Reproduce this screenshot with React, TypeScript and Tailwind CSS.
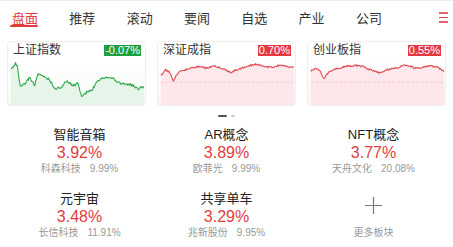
import React from 'react';

const FONT = { fontFamily: '"Liberation Sans", "Noto Sans CJK SC", sans-serif' };

const TABS = ['盘面', '推荐', '滚动', '要闻', '自选', '产业', '公司'];

type Pt = [number, number];

const GREEN_PTS: Pt[] = [
    [0, 28], [4.7, 21.3], [7, 26], [9.7, 46.3], [14.7, 43], [19.7, 36], [24.7, 44.7], [28, 33],
    [33, 34.7], [39.7, 38], [46.3, 48], [53, 46.3], [58, 39.7], [64.7, 44.7], [69.7, 42.3],
    [74, 56.3], [79.7, 51.3], [84.7, 49.7], [89.7, 39.7], [96.3, 36.3], [104.7, 35.7],
    [111.3, 41.3], [118, 43], [124.7, 43.7], [133, 48], [139, 45.7],
];

const SZ_PTS: Pt[] = [
    [0, 34.7], [4.7, 28], [9.7, 31.3], [13, 39.7], [18, 31.3], [21.3, 29.7], [26.3, 28],
    [39.7, 24.7], [46.3, 26.3], [56.3, 24.7], [63, 26.3], [73, 31.3], [79.7, 28], [89.7, 24.7],
    [99.7, 22.3], [108, 24.7], [116.3, 25.7], [124.7, 23], [131.3, 25], [139, 25.7],
];

const CY_PTS: Pt[] = [
    [0, 29.7], [4.7, 26.3], [9.7, 29], [13.7, 38], [18, 31.3], [23, 28], [36.3, 24.7],
    [46.3, 23.7], [54.7, 24.7], [61.3, 28], [71.3, 31.3], [79.7, 28], [89.7, 26.3], [99.7, 23],
    [108, 26.3], [116.3, 25.7], [124.7, 23.7], [133, 26.3], [139, 29.7],
];

function noise(i: number, seed: number) {
    const v = Math.sin(i * 12.9898 + seed * 78.233) * 43758.5453;
    return (v - Math.floor(v)) * 2 - 1;
}

// interpolate the rough shape at small steps and add a bit of jitter
function buildLine(pts: Pt[], seed: number, amp: number) {
    const out: Pt[] = [];
    let k = 0;
    for (let x = 0; x <= 139.01; x += 0.7) {
        while (k < pts.length - 2 && pts[k + 1][0] < x) k++;
        const [x0, y0] = pts[k];
        const [x1, y1] = pts[k + 1];
        const t = Math.min(1, Math.max(0, (x - x0) / (x1 - x0)));
        const y = y0 + (y1 - y0) * t + noise(out.length, seed) * amp;
        out.push([x, y]);
    }
    return out;
}

function toPath(line: Pt[]) {
    return line.map(([x, y], i) => `${i ? 'L' : 'M'}${x.toFixed(1)} ${y.toFixed(1)}`).join(' ');
}

const CARDS = [
    { name: '上证指数', pct: '-0.07%', up: false, line: buildLine(GREEN_PTS, 3, 1.3) },
    { name: '深证成指', pct: '0.70%', up: true, line: buildLine(SZ_PTS, 7, 0.9) },
    { name: '创业板指', pct: '0.55%', up: true, line: buildLine(CY_PTS, 11, 0.9) },
];

const SECTORS = [
    { name: '智能音箱', pct: '3.92%', stock: '科森科技', gain: '9.99%' },
    { name: 'AR概念', pct: '3.89%', stock: '欧菲光', gain: '9.99%' },
    { name: 'NFT概念', pct: '3.77%', stock: '天舟文化', gain: '20.08%' },
    { name: '元宇宙', pct: '3.48%', stock: '长信科技', gain: '11.91%' },
    { name: '共享单车', pct: '3.29%', stock: '兆新股份', gain: '9.95%' },
];

function IndexCard({ card }: { card: (typeof CARDS)[number] }) {
    const d = toPath(card.line);
    const area = `${d} L139 65 L0 65 Z`;
    const stroke = card.up ? '#e0474d' : '#2fa548';
    return (
        <div
            className={`flex h-[65px] w-[139px] flex-col overflow-hidden rounded-[4px] border border-[#efefef] bg-gradient-to-b from-white from-30% ${card.up ? 'to-[#fff3f4]' : 'to-[#f5fbf6]'}`}
        >
            <div className="flex h-[17px] shrink-0 items-start justify-between pl-[5px] pr-[4px] pt-[2px]">
                <span className="text-[12px] leading-[13px] text-[#333]">{card.name}</span>
                <span
                    className={`mt-[1px] px-[1px] text-[11px] leading-[11px] text-white ${card.up ? 'bg-[#e4393e]' : 'bg-[#1f9e3c]'}`}
                >
                    {card.pct}
                </span>
            </div>
            <svg width="139" height="48" viewBox="0 17 139 48" className="block">
                <path d={area} fill={card.up ? '#fde4e7' : '#e2f3e6'} fillOpacity="0.85" />
                {card.up && (
                    <line x1="0" y1="41.3" x2="139" y2="41.3" stroke="#f5c3c7" strokeWidth="0.8" strokeDasharray="3 2" />
                )}
                <path d={d} fill="none" stroke={stroke} strokeWidth="1.1" strokeLinejoin="round" />
            </svg>
        </div>
    );
}

export default function App() {
    return (
        <div className="h-[247px] w-[453px] overflow-hidden bg-white" style={FONT}>
            {/* top tabs */}
            <div className="relative flex h-[35px] items-center border-t border-[#eeeeee] pl-[12px]">
                <div className="flex gap-[31.3px]">
                    {TABS.map((t, i) => (
                        <div key={t} className="relative">
                            <span className={`text-[13px] leading-[16px] ${i === 0 ? 'text-[#e23b3f]' : 'text-[#333]'}`}>
                                {t}
                            </span>
                            {i === 0 && (
                                <div className="absolute left-[-2px] top-[19px] h-[2px] w-[28px] rounded-full bg-[#e23b3f]" />
                            )}
                        </div>
                    ))}
                </div>
                <div className="absolute right-[5px] top-[11px] flex flex-col gap-[3px]">
                    <div className="h-[1.5px] w-[9px] bg-[#e2636a]" />
                    <div className="h-[1.5px] w-[9px] bg-[#d9474f]" />
                    <div className="h-[1.5px] w-[9px] bg-[#e2636a]" />
                </div>
            </div>

            {/* index cards */}
            <div className="mt-[6px] flex gap-[11px] pl-[7px]">
                {CARDS.map((c) => (
                    <IndexCard key={c.name} card={c} />
                ))}
            </div>

            {/* pager */}
            <div className="flex h-[20px] items-center justify-center gap-[4px]">
                <div className="h-[2px] w-[9px] rounded-full bg-[#555]" />
                <div className="h-[2px] w-[4px] rounded-full bg-[#ccc]" />
            </div>

            {/* hot sectors */}
            <div className="grid grid-cols-3 px-[6px]">
                {SECTORS.map((s) => (
                    <div key={s.name} className="flex h-[64px] flex-col items-center">
                        <span className="text-[13px] leading-[18px] text-[#222]">{s.name}</span>
                        <span className="text-[16px] leading-[18px] text-[#e23b3f]">{s.pct}</span>
                        <div className="mt-[1px] flex gap-[9px] text-[10px] leading-[12px] text-[#999]">
                            <span>{s.stock}</span>
                            <span>{s.gain}</span>
                        </div>
                    </div>
                ))}
                <div className="flex h-[64px] flex-col items-center">
                    <div className="h-[36px] pt-[7px]">
                        <svg width="17" height="17" viewBox="0 0 17 17">
                            <path d="M8.5 0V17M0 8.5H17" stroke="#777" strokeWidth="1.2" />
                        </svg>
                    </div>
                    <span className="mt-[1px] text-[10px] leading-[12px] text-[#999]">更多板块</span>
                </div>
            </div>
        </div>
    );
}
